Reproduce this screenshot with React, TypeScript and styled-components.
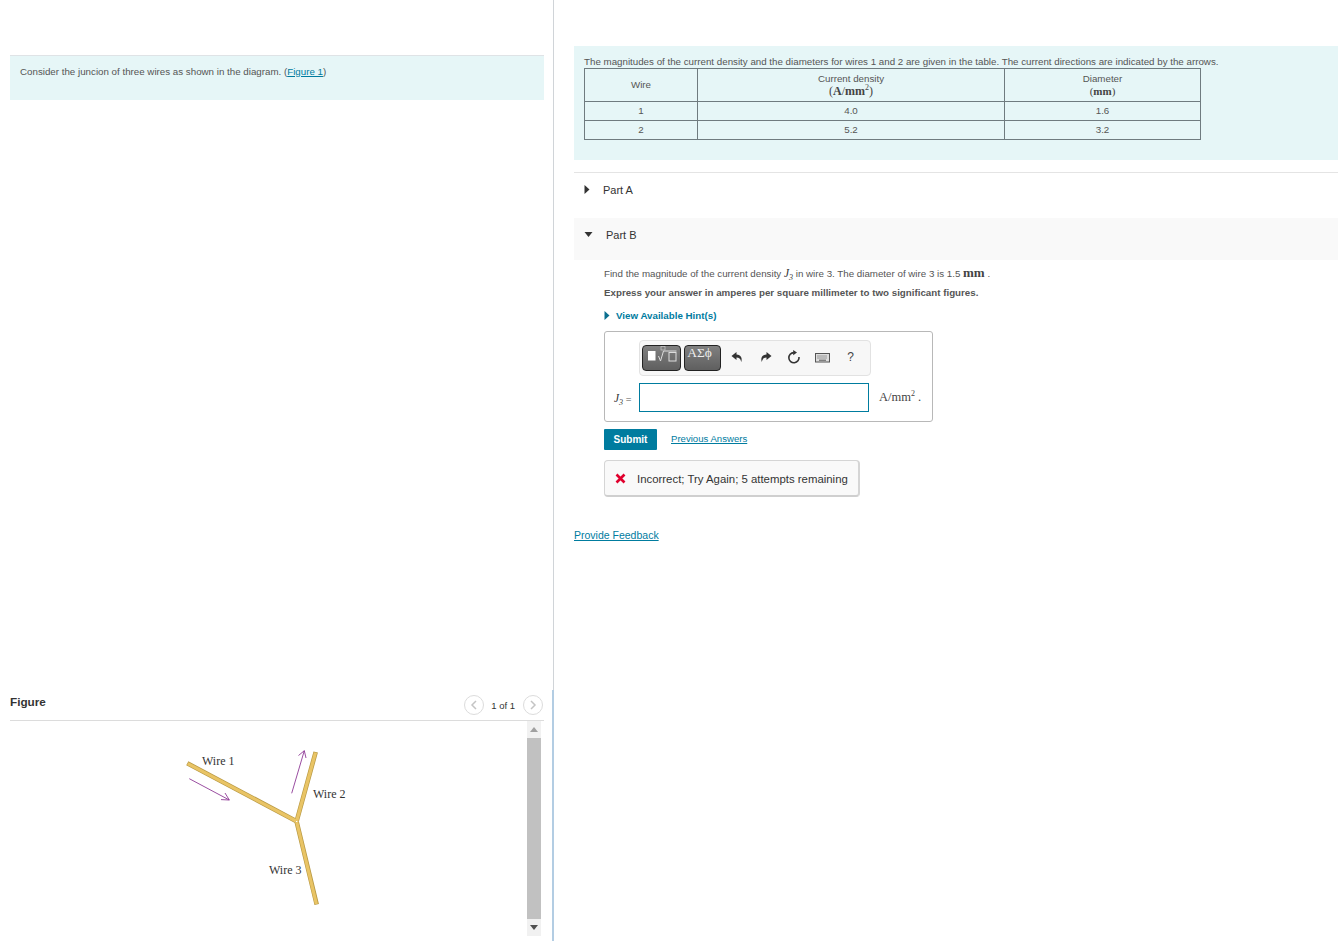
import React from "react";
import styled, { createGlobalStyle } from "styled-components";

const Global = createGlobalStyle`
  html, body { margin: 0; padding: 0; background: #fff; }
  body { font-family: "Liberation Sans", Arial, sans-serif; color: #333; }
`;

const Page = styled.div`
  display: grid;
  grid-template-columns: 553px 1fr;
  width: 1338px;
  height: 941px;
  overflow: hidden;
`;

const LeftPane = styled.div`
  display: flex;
  flex-direction: column;
  height: 941px;
  padding: 55px 9px 0 10px;
  box-sizing: border-box;
`;

const IntroBox = styled.div`
  height: 45px;
  box-sizing: border-box;
  background: #e6f6f7;
  border-top: 1px solid #dfe3e6;
  padding: 10px 10px 0 10px;
  font-size: 9.75px;
  line-height: 12px;
  color: #555;
`;

const TextLink = styled.a<{ $size?: number; $lift?: number }>`
  color: #007c9f;
  text-decoration: underline;
  font-size: ${(p) => p.$size ?? 9.75}px;
  margin-top: ${(p) => -(p.$lift ?? 0)}px;
`;

const FigureHeader = styled.div`
  margin-top: 591px;
  height: 30px;
  box-sizing: border-box;
  border-bottom: 1px solid #dcdcdc;
  display: flex;
  align-items: center;
  justify-content: space-between;
  padding-bottom: 1px;
`;

const FigureTitle = styled.div`
  font-size: 11.75px;
  font-weight: bold;
  color: #333;
  margin-top: -7px;
`;

const Pager = styled.div`
  display: flex;
  align-items: center;
  gap: 7px;
  font-size: 9.5px;
  color: #333;
  margin-right: 1px;
`;

const PagerText = styled.span`
  margin-right: 1px;
`;

const PagerBtn = styled.div`
  width: 20px;
  height: 20px;
  box-sizing: border-box;
  border: 1px solid #dcdcdc;
  border-radius: 50%;
  display: flex;
  align-items: center;
  justify-content: center;
`;

const FigureBody = styled.div`
  display: flex;
  justify-content: space-between;
  height: 215px;
`;

const Diagram = styled.svg`
  width: 190px;
  height: 175px;
  margin: 19px 0 0 160px;
  display: block;
  flex: none;
`;

const Scrollbar = styled.div`
  width: 14px;
  height: 215px;
  margin-right: 3px;
  background: #f1f1f1;
  display: flex;
  flex-direction: column;
  align-items: center;
`;

const ScrollCap = styled.div`
  height: 17px;
  flex: none;
  display: flex;
  align-items: center;
  justify-content: center;
`;

const ScrollThumb = styled.div`
  width: 100%;
  flex: 1;
  background: #c1c1c1;
`;

const RightPane = styled.div`
  position: relative;
  padding: 46px 0 0 20px;
  border-left: 1px solid #d0d4d8;
  height: 941px;
  box-sizing: border-box;
`;

const DividerAccent = styled.div`
  position: absolute;
  left: -2px;
  top: 690px;
  bottom: 0;
  width: 2px;
  background: #b3cde3;
`;

const InfoBox = styled.div`
  height: 114px;
  box-sizing: border-box;
  background: #e6f6f7;
  padding: 10px 10px 0;
  font-size: 9.75px;
  line-height: 12px;
  color: #555;
  white-space: nowrap;
`;

const DataTable = styled.table`
  border-collapse: collapse;
  table-layout: fixed;
  width: 617px;
  margin-top: 0;
  font-size: 9.75px;
  color: #555;
  td {
    border: 1px solid #6f7b7f;
    text-align: center;
    padding: 0;
    height: 18px;
  }
`;

const HeadCell = styled.div`
  line-height: 12px;
  padding: 4px 0 3px;
`;

const MathUnit = styled.div<{ $size?: number }>`
  font-family: "Liberation Serif", serif;
  font-size: ${(p) => p.$size ?? 12}px;
  line-height: 13px;
  color: #444;
`;

const Sup = styled.sup`
  font-size: 8px;
  line-height: 0;
`;

const PartARow = styled.div`
  margin-top: 12px;
  border-top: 1px solid #e4e4e4;
  height: 46px;
  box-sizing: border-box;
  padding: 10px 0 0 10px;
  display: flex;
  align-items: flex-start;
  gap: 13px;
  font-size: 11px;
  line-height: 14px;
  color: #333;
`;

const Caret = styled.svg<{ $top?: number }>`
  flex: none;
  display: block;
  margin-top: ${(p) => p.$top ?? 0}px;
`;

const PartBRow = styled.div`
  height: 42px;
  box-sizing: border-box;
  background: #f9f9f9;
  padding: 10px 0 0 10px;
  display: flex;
  align-items: flex-start;
  gap: 13px;
  font-size: 11px;
  line-height: 14px;
  color: #333;
`;

const PartBody = styled.div`
  padding: 6px 0 0 30px;
`;

const Prompt = styled.div`
  height: 13px;
  font-size: 9.75px;
  line-height: 13px;
  color: #555;
  white-space: nowrap;
`;

const MathVar = styled.i`
  font-family: "Liberation Serif", serif;
  font-size: 11.5px;
  color: #333;
  sub {
    font-size: 8px;
    line-height: 0;
  }
`;

const MathMm = styled.b`
  font-family: "Liberation Serif", serif;
  font-size: 13px;
  color: #444;
`;

const Instruction = styled.div`
  margin-top: 7px;
  font-size: 9.75px;
  line-height: 13px;
  font-weight: bold;
  color: #555;
`;

const HintRow = styled.div`
  margin-top: 10px;
  display: flex;
  align-items: center;
  gap: 6px;
  font-size: 9.75px;
  line-height: 13px;
  font-weight: bold;
  color: #007c9f;
`;

const AnswerBox = styled.div`
  margin-top: 9px;
  width: 329px;
  height: 91px;
  box-sizing: border-box;
  border: 1px solid #b8b8b8;
  border-radius: 3px;
  padding: 8px 0 0 34px;
`;

const Toolbar = styled.div`
  width: 232px;
  height: 36px;
  box-sizing: border-box;
  background: #f7f7f7;
  border: 1px solid #e2e2e2;
  border-radius: 4px;
  display: flex;
  align-items: center;
  padding-left: 2px;
`;

const DarkButton = styled.div<{ $w: number; $ml?: number; $pr?: number }>`
  width: ${(p) => p.$w}px;
  margin-left: ${(p) => p.$ml ?? 0}px;
  padding-right: ${(p) => p.$pr ?? 0}px;
  height: 26px;
  box-sizing: border-box;
  border: 1px solid #222;
  border-radius: 4px;
  background: linear-gradient(#808080, #5f5f5f);
  color: #eee;
  flex: none;
  display: flex;
  align-items: flex-start;
  justify-content: center;
  font-family: "Liberation Serif", serif;
  font-size: 13.5px;
  line-height: 13px;
`;

const ToolIcon = styled.div<{ $w: number }>`
  width: ${(p) => p.$w}px;
  flex: none;
  display: flex;
  align-items: center;
  justify-content: center;
  margin-bottom: 2px;
  font-size: 12px;
  color: #444;
`;

const InputRow = styled.div`
  margin: 7px 0 0 -25px;
  display: flex;
  align-items: center;
`;

const InputLabel = styled.div`
  width: 25px;
  flex: none;
  font-size: 9.75px;
  color: #555;
`;

const AnswerInput = styled.div`
  width: 230px;
  height: 29px;
  box-sizing: border-box;
  border: 1px solid #007c9f;
  flex: none;
`;

const UnitText = styled.span`
  margin-left: 10px;
  font-family: "Liberation Serif", serif;
  font-size: 12.5px;
  color: #444;
`;

const SubmitRow = styled.div`
  margin-top: 7px;
  display: flex;
  align-items: center;
  gap: 14px;
`;

const SubmitButton = styled.div`
  width: 53px;
  height: 21px;
  background: #007c9f;
  border-radius: 1px;
  color: #fff;
  font-size: 10px;
  font-weight: bold;
  line-height: 21px;
  text-align: center;
`;

const Feedback = styled.div`
  margin-top: 10px;
  width: 256px;
  height: 37px;
  box-sizing: border-box;
  background: #f9f9f9;
  border: 1px solid #d5d5d5;
  border-bottom: 2px solid #cfcfcf;
  border-right: 2px solid #d5d5d5;
  border-radius: 4px;
  display: flex;
  align-items: center;
  padding: 1px 0 0 10px;
  gap: 11px;
  font-size: 11.4px;
  color: #333;
`;

const FeedbackLink = styled.div`
  margin-top: 30px;
  line-height: 14px;
`;

const Chevron = ({ dir }: { dir: "l" | "r" }) => (
  <svg width="8" height="10" viewBox="0 0 8 10">
    <path d={dir === "l" ? "M6 1 L2 5 L6 9" : "M2 1 L6 5 L2 9"} fill="none" stroke="#c4c4c4" strokeWidth="1.5" />
  </svg>
);

const Right = ({ top, color = "#333" }: { top?: number; color?: string }) => (
  <Caret $top={top} width="6" height="9" viewBox="0 0 6 9">
    <path d="M0.5 0 L5.5 4.5 L0.5 9 Z" fill={color} />
  </Caret>
);

const Down = ({ top }: { top?: number }) => (
  <Caret $top={top} width="9" height="5" viewBox="0 0 9 5">
    <path d="M0.5 0 H8.5 L4.5 5 Z" fill="#333" />
  </Caret>
);

export default function App() {
  return (
    <Page>
      <Global />
      <LeftPane>
        <IntroBox>
          Consider the juncion of three wires as shown in the diagram. (<TextLink>Figure 1</TextLink>)
        </IntroBox>
        <FigureHeader>
          <FigureTitle>Figure</FigureTitle>
          <Pager>
            <PagerBtn><Chevron dir="l" /></PagerBtn>
            <PagerText>1 of 1</PagerText>
            <PagerBtn><Chevron dir="r" /></PagerBtn>
          </Pager>
        </FigureHeader>
        <FigureBody>
          <Diagram viewBox="170 740 190 175">
            <g fill="none" strokeLinecap="butt">
              <path d="M187.3 763.3 L296 821 M315.7 752 L296.7 821 M296.7 822 L316.7 904.5" stroke="#b99a45" strokeWidth="4.6" />
              <path d="M187.8 763.6 L296 821 M315.5 752.6 L296.7 821 M296.7 822 L316.4 904" stroke="#e9c465" strokeWidth="3.2" />
              <path d="M189.3 778.7 L229.3 800 M221 799.6 L229.3 800 L225 793 M291.7 793.3 L304.3 750.7 M298.5 755.5 L304.3 750.7 L306 758" stroke="#8e3a96" strokeWidth="0.9" />
            </g>
            <g fontFamily="'Liberation Serif', serif" fontSize="12" fill="#333">
              <text x="202" y="765">Wire 1</text>
              <text x="313" y="798">Wire 2</text>
              <text x="269" y="874">Wire 3</text>
            </g>
          </Diagram>
          <Scrollbar>
            <ScrollCap>
              <svg width="8" height="5" viewBox="0 0 8 5"><path d="M0 5 L4 0 L8 5 Z" fill="#a0a0a0" /></svg>
            </ScrollCap>
            <ScrollThumb />
            <ScrollCap>
              <svg width="8" height="5" viewBox="0 0 8 5"><path d="M0 0 L8 0 L4 5 Z" fill="#505050" /></svg>
            </ScrollCap>
          </Scrollbar>
        </FigureBody>
      </LeftPane>
      <RightPane>
        <DividerAccent />
        <InfoBox>
          The magnitudes of the current density and the diameters for wires 1 and 2 are given in the table. The current directions are indicated by the arrows.
          <DataTable>
            <colgroup>
              <col style={{ width: 113 }} />
              <col style={{ width: 307 }} />
              <col style={{ width: 196 }} />
            </colgroup>
            <tbody>
              <tr>
                <td>Wire</td>
                <td>
                  <HeadCell>
                    Current density
                    <MathUnit>(<b>A</b>/<b>mm</b><Sup>2</Sup>)</MathUnit>
                  </HeadCell>
                </td>
                <td>
                  <HeadCell>
                    Diameter
                    <MathUnit $size={11}>(<b>mm</b>)</MathUnit>
                  </HeadCell>
                </td>
              </tr>
              <tr><td>1</td><td>4.0</td><td>1.6</td></tr>
              <tr><td>2</td><td>5.2</td><td>3.2</td></tr>
            </tbody>
          </DataTable>
        </InfoBox>
        <PartARow>
          <Right top={2} />
          <span>Part A</span>
        </PartARow>
        <PartBRow>
          <Down top={4} />
          <span>Part B</span>
        </PartBRow>
        <PartBody>
          <Prompt>
            Find the magnitude of the current density <MathVar>J<sub>3</sub></MathVar> in wire 3. The diameter of wire 3 is 1.5 <MathMm>mm</MathMm> .
          </Prompt>
          <Instruction>Express your answer in amperes per square millimeter to two significant figures.</Instruction>
          <HintRow>
            <Right color="#0b6f8f" />
            <span>View Available Hint(s)</span>
          </HintRow>
          <AnswerBox>
            <Toolbar>
              <DarkButton $w={39}>
                <svg width="34" height="20" viewBox="0 0 34 20">
                  <rect x="3" y="5" width="7.5" height="9.5" fill="#fff" />
                  <path d="M13.5 10 L15.5 15 L18.5 5 H31.5" fill="none" stroke="#ddd" strokeWidth="1" />
                  <rect x="24" y="6.5" width="7" height="8.5" fill="none" stroke="#ddd" strokeWidth="1" />
                  <rect x="16" y="0.5" width="4" height="3.5" fill="none" stroke="#ccc" strokeWidth="0.7" />
                </svg>
              </DarkButton>
              <DarkButton $w={37} $ml={3} $pr={6}>ΑΣϕ</DarkButton>
              <ToolIcon $w={32}>
                <svg width="12" height="12" viewBox="0 0 12 12"><path d="M5.5 1 L0.5 5 L5.5 9 V6.6 C8 6.6 9.6 7.6 10.2 11 C11.6 7 10 3.6 5.5 3.4 Z" fill="#333" /></svg>
              </ToolIcon>
              <ToolIcon $w={26}>
                <svg width="12" height="12" viewBox="0 0 12 12"><path d="M6.5 1 L11.5 5 L6.5 9 V6.6 C4 6.6 2.4 7.6 1.8 11 C0.4 7 2 3.6 6.5 3.4 Z" fill="#333" /></svg>
              </ToolIcon>
              <ToolIcon $w={30}>
                <svg width="14" height="14" viewBox="0 0 14 14">
                  <path d="M6.8 2.6 A5.1 5.1 0 1 0 12 7" fill="none" stroke="#333" strokeWidth="1.6" />
                  <path d="M6.2 0 L10 2.6 L6.2 5.2 Z" fill="#333" />
                </svg>
              </ToolIcon>
              <ToolIcon $w={27}>
                <svg width="15" height="11" viewBox="0 0 15 11">
                  <rect x="0.5" y="1.5" width="14" height="8.5" fill="#ddd" stroke="#555" />
                  <path d="M2.5 4 H12.5 M2.5 6 H12.5" stroke="#555" strokeWidth="1" strokeDasharray="1 1" />
                  <path d="M4 8.2 H11" stroke="#555" strokeWidth="1" />
                </svg>
              </ToolIcon>
              <ToolIcon $w={29}>?</ToolIcon>
            </Toolbar>
            <InputRow>
              <InputLabel><MathVar>J<sub>3</sub></MathVar> =</InputLabel>
              <AnswerInput />
              <UnitText>A/mm<Sup>2</Sup> .</UnitText>
            </InputRow>
          </AnswerBox>
          <SubmitRow>
            <SubmitButton>Submit</SubmitButton>
            <TextLink $size={9.6} $lift={2}>Previous Answers</TextLink>
          </SubmitRow>
          <Feedback>
            <svg width="11" height="11" viewBox="0 0 11 11">
              <path d="M1.5 1.5 L9.5 9.5 M9.5 1.5 L1.5 9.5" stroke="#e0002d" strokeWidth="2.6" />
            </svg>
            <span>Incorrect; Try Again; 5 attempts remaining</span>
          </Feedback>
        </PartBody>
        <FeedbackLink>
          <TextLink $size={10.5}>Provide Feedback</TextLink>
        </FeedbackLink>
      </RightPane>
    </Page>
  );
}
